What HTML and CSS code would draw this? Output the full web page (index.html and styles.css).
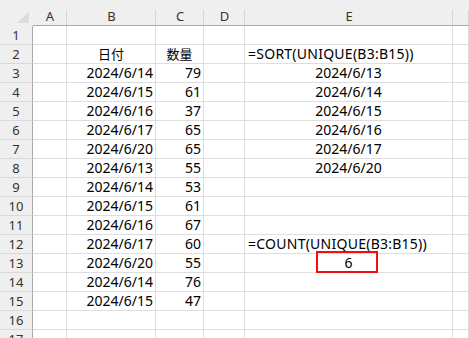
FILE: index.html
```html
<!DOCTYPE html>
<html lang="ja">
<head>
<meta charset="utf-8">
<title>UNIQUE</title>
<link rel="stylesheet" href="styles.css">
</head>
<body>
<div class="sheet">
  <div class="corner"></div>
  <div class="colhead">A</div><div class="colhead">B</div><div class="colhead">C</div><div class="colhead">D</div><div class="colhead">E</div><div class="colhead"></div>

  <div class="rowhead">1</div><div class="cell"></div><div class="cell"></div><div class="cell"></div><div class="cell"></div><div class="cell"></div><div class="cell"></div>
  <div class="rowhead">2</div><div class="cell"></div><div class="cell mid cjk">日付</div><div class="cell mid cjk">数量</div><div class="cell"></div><div class="cell left">=SORT(UNIQUE(B3:B15))</div><div class="cell"></div>
  <div class="rowhead">3</div><div class="cell"></div><div class="cell num">2024/6/14</div><div class="cell num">79</div><div class="cell"></div><div class="cell mid">2024/6/13</div><div class="cell"></div>
  <div class="rowhead">4</div><div class="cell"></div><div class="cell num">2024/6/15</div><div class="cell num">61</div><div class="cell"></div><div class="cell mid">2024/6/14</div><div class="cell"></div>
  <div class="rowhead">5</div><div class="cell"></div><div class="cell num">2024/6/16</div><div class="cell num">37</div><div class="cell"></div><div class="cell mid">2024/6/15</div><div class="cell"></div>
  <div class="rowhead">6</div><div class="cell"></div><div class="cell num">2024/6/17</div><div class="cell num">65</div><div class="cell"></div><div class="cell mid">2024/6/16</div><div class="cell"></div>
  <div class="rowhead">7</div><div class="cell"></div><div class="cell num">2024/6/20</div><div class="cell num">65</div><div class="cell"></div><div class="cell mid">2024/6/17</div><div class="cell"></div>
  <div class="rowhead">8</div><div class="cell"></div><div class="cell num">2024/6/13</div><div class="cell num">55</div><div class="cell"></div><div class="cell mid">2024/6/20</div><div class="cell"></div>
  <div class="rowhead">9</div><div class="cell"></div><div class="cell num">2024/6/14</div><div class="cell num">53</div><div class="cell"></div><div class="cell"></div><div class="cell"></div>
  <div class="rowhead">10</div><div class="cell"></div><div class="cell num">2024/6/15</div><div class="cell num">61</div><div class="cell"></div><div class="cell"></div><div class="cell"></div>
  <div class="rowhead">11</div><div class="cell"></div><div class="cell num">2024/6/16</div><div class="cell num">67</div><div class="cell"></div><div class="cell"></div><div class="cell"></div>
  <div class="rowhead">12</div><div class="cell"></div><div class="cell num">2024/6/17</div><div class="cell num">60</div><div class="cell"></div><div class="cell left">=COUNT(UNIQUE(B3:B15))</div><div class="cell"></div>
  <div class="rowhead">13</div><div class="cell"></div><div class="cell num">2024/6/20</div><div class="cell num">55</div><div class="cell"></div><div class="cell mid marked">6<span class="outline"></span></div><div class="cell"></div>
  <div class="rowhead">14</div><div class="cell"></div><div class="cell num">2024/6/14</div><div class="cell num">76</div><div class="cell"></div><div class="cell"></div><div class="cell"></div>
  <div class="rowhead">15</div><div class="cell"></div><div class="cell num">2024/6/15</div><div class="cell num">47</div><div class="cell"></div><div class="cell"></div><div class="cell"></div>
  <div class="rowhead">16</div><div class="cell"></div><div class="cell"></div><div class="cell"></div><div class="cell"></div><div class="cell"></div><div class="cell"></div>
  <div class="rowhead">17</div><div class="cell"></div><div class="cell"></div><div class="cell"></div><div class="cell"></div><div class="cell"></div><div class="cell"></div>
</div>
</body>
</html>
```

FILE: styles.css
```css
html, body {
  margin: 0;
  padding: 0;
  background: #ffffff;
  overflow: hidden;
}

.sheet {
  display: grid;
  grid-template-columns: 33px 34px 89px 48px 41px 208px 1fr;
  grid-template-rows: 26px repeat(17, 19px);
  width: 469px;
  font-family: "Noto Sans", "Noto Sans CJK JP", sans-serif;
  font-size: 14px;
  color: #000;
}

.sheet > div {
  box-sizing: border-box;
  display: flex;
  align-items: flex-end;
  line-height: 18px;
  white-space: nowrap;
  min-width: 0;
}

/* top-left select-all box with its small triangle */
.corner {
  background:
    linear-gradient(to bottom right, transparent 50%, #dcdcdc 50%) right 4px bottom 3px / 11px 11px no-repeat,
    #efefef;
}

.colhead {
  justify-content: center;
  font-size: 13px;
  color: #333;
  border-bottom: 1px solid #ababab;
  background:
    linear-gradient(#d6d6d6, #d6d6d6) right bottom / 1px 15px no-repeat,
    #efefef;
}

.rowhead {
  justify-content: center;
  font-size: 13px;
  color: #333;
  background: #efefef;
  border-right: 1px solid #ababab;
  border-bottom: 1px solid #d9d9d9;
}

.cell {
  border-right: 1px solid #dedede;
  border-bottom: 1px solid #dedede;
}

.num {
  justify-content: flex-end;
  padding-right: 2px;
}

.mid {
  justify-content: center;
}

/* formula text, spilling past the cell edge like a sheet does */
.left {
  padding-left: 3px;
  overflow: visible;
  letter-spacing: 0.25px;
}

.cjk {
  font-size: 13px;
  font-family: "Noto Sans CJK JP", sans-serif;
}

.marked {
  position: relative;
}

/* red frame drawn over the result cell */
.outline {
  position: absolute;
  left: 71px;
  top: -3px;
  width: 62px;
  height: 22px;
  box-sizing: border-box;
  border: 2px solid #f01010;
}
```
